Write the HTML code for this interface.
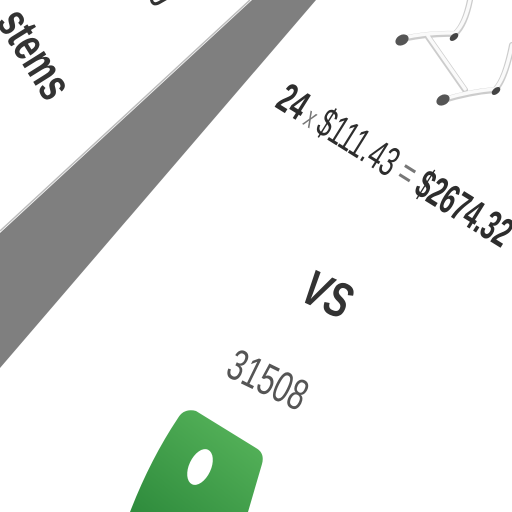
<!DOCTYPE html>
<html><head><style>
html,body{margin:0;padding:0;width:512px;height:512px;overflow:hidden;background:#fff;position:relative}
.t{position:absolute;white-space:nowrap;transform-origin:0 0;font-family:"Liberation Sans",sans-serif}
</style></head><body>
<svg width="512" height="512" style="position:absolute;left:0;top:0">
<polygon points="252,0 316,0 0,368 0,233" fill="#7f7f7f"/>
<polyline points="250,0 0,231" stroke="#bbb" stroke-width="1.5" fill="none"/>
<g stroke="#ccc" stroke-width="6" fill="none" stroke-linecap="round">
<path d="M402,39 Q430,33 455,34 Q465,25 470,0"/>
<path d="M428,37 L465,90"/>
<path d="M444,100 Q470,92 495,90 Q505,80 512,45"/>
</g>
<g stroke="#fafafa" stroke-width="3.5" fill="none" stroke-linecap="round">
<path d="M402,38 Q430,32 455,33 Q465,24 470,0"/>
<path d="M428,36 L465,89"/>
<path d="M444,99 Q470,91 495,89 Q505,79 512,45"/>
</g>
<ellipse cx="402" cy="40" rx="7" ry="5" fill="#555" transform="rotate(-30 402 40)"/>
<ellipse cx="443" cy="100" rx="7" ry="5" fill="#555" transform="rotate(-30 443 100)"/>
<ellipse cx="454" cy="37" rx="5" ry="3" fill="#444" transform="rotate(-40 454 37)"/>
<ellipse cx="496" cy="91" rx="5" ry="3" fill="#444" transform="rotate(-40 496 91)"/>
<defs><linearGradient id="g" x1="0" y1="1" x2="1" y2="0"><stop offset="0" stop-color="#2e8b3c"/><stop offset="1" stop-color="#5bb85e"/></linearGradient></defs>
<path d="M178,418 Q184,408 196,411 L256,448 Q265,453 262,464 L248,512 L130,512 Q150,460 178,418 Z" fill="url(#g)"/>
<ellipse cx="200" cy="467" rx="11" ry="19" transform="rotate(25 200 467)" fill="#fff"/>
</svg>
<div class="t" style="left:34px;top:-2px;font-size:46px;font-weight:bold;color:#333;transform:rotate(58deg) scale(0.72,1.05)">stems</div>
<div class="t" style="left:180px;top:-22px;font-size:32px;font-weight:bold;color:#333;transform:rotate(60deg) scale(0.72,1.05)">g</div>
<div class="t" style="left:294px;top:74px;font-size:42px;font-weight:bold;color:#2d2d2d;transform:rotate(32deg) scale(0.6,1)">24<span style="font-weight:normal;color:#777;font-size:30px"> x </span><span style="font-weight:normal">$111.43</span><span style="font-weight:normal;color:#777"> = </span>$2674.32</div>
<div class="t" style="left:318px;top:258px;font-size:50px;font-weight:bold;font-style:italic;color:#333;transform:rotate(25deg) scale(0.72,1)">VS</div>
<div class="t" style="left:241px;top:340px;font-size:44px;color:#555;transform:rotate(26deg) scale(0.68,1)">31508</div>
</body></html>
